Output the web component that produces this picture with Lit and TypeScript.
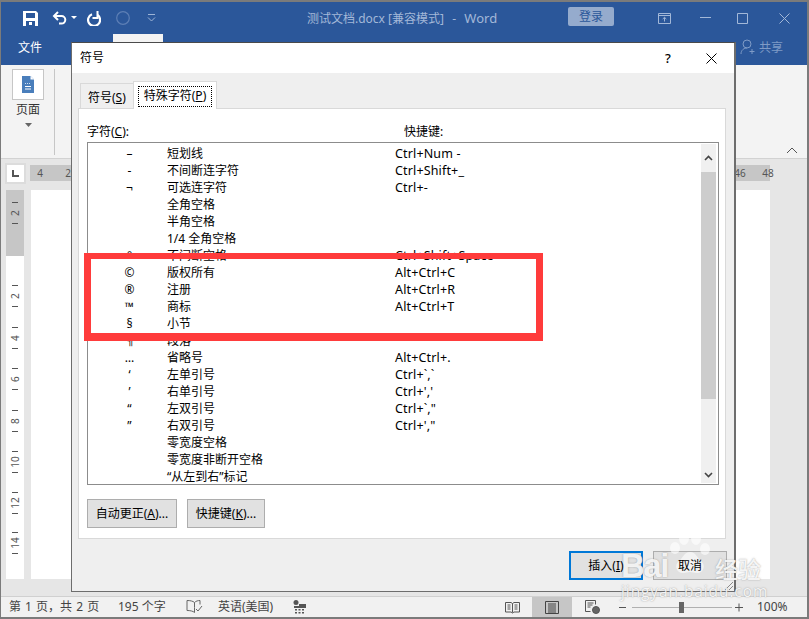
import { LitElement, html, css, svg } from "lit";
import { customElement } from "lit/decorators.js";

const rows: [string, string, string][] = [
  ["–", "短划线", "Ctrl+Num -"],
  ["-", "不间断连字符", "Ctrl+Shift+_"],
  ["¬", "可选连字符", "Ctrl+-"],
  ["", "全角空格", ""],
  ["", "半角空格", ""],
  ["", "1/4 全角空格", ""],
  ["°", "不间断空格", "Ctrl+Shift+Space"],
  ["©", "版权所有", "Alt+Ctrl+C"],
  ["®", "注册", "Alt+Ctrl+R"],
  ["™", "商标", "Alt+Ctrl+T"],
  ["§", "小节", ""],
  ["¶", "段落", ""],
  ["…", "省略号", "Alt+Ctrl+."],
  ["‘", "左单引号", "Ctrl+`,`"],
  ["’", "右单引号", "Ctrl+','"],
  ["“", "左双引号", "Ctrl+`,\""],
  ["”", "右双引号", "Ctrl+',\""],
  ["", "零宽度空格", ""],
  ["", "零宽度非断开空格", ""],
  ["", "“从左到右”标记", ""],
];

const vLabels: [number, string][] = [
  [23, "2"], [106, "2"], [148, "4"], [189, "6"], [231, "8"], [272, "10"], [313, "12"], [353, "14"],
];

@customElement("app-root")
export class AppRoot extends LitElement {
  static styles = css`
    :host {
      display: block;
      position: relative;
      width: 809px;
      height: 619px;
      overflow: hidden;
      font-family: "Noto Sans", "Noto Sans CJK SC", sans-serif;
      font-size: 12px;
      color: #1a1a1a;
    }
    * { box-sizing: border-box; }
    svg { display: block; flex: none; }
    u { text-underline-offset: 1px; }
    .frame {
      height: 619px;
      border: 1px solid #7b7b7b;
      border-width: 2px 2px 2px 1px;
      display: flex;
      flex-direction: column;
      background: #e6e6e6;
    }
    .titlebar {
      height: 32px;
      background: #2b579a;
      display: flex;
      align-items: center;
      color: #fff;
      position: relative;
    }
    .qat { display: flex; align-items: center; padding-left: 22px; }
    .qi1 { margin-left: 14px; }
    .qi2 { margin-left: 4px; }
    .qi3 { margin-left: 10px; }
    .qi4 { margin-left: 15px; }
    .qi5 { margin-left: 17px; }
    .title {
      position: absolute;
      left: 306px;
      top: 7px;
      color: #a3b8d8;
      font-size: 12px;
      line-height: 18px;
      white-space: pre;
    }
    .title .w { font-size: 13px; margin-left: 2px; }
    .title .d { margin-left: 2px; }
    .login {
      position: absolute;
      left: 567px;
      top: 5px;
      width: 46px;
      height: 19px;
      border-radius: 2px;
      background: #95abcd;
      color: #2b579a;
      font-size: 12px;
      line-height: 19px;
      text-align: center;
    }
    .winbtns { margin-left: auto; display: flex; align-items: center; }
    .wb1 { margin-right: 29px; }
    .wb2 { margin-right: 26px; }
    .wb3 { margin-right: 31px; }
    .wb4 { margin-right: 17px; }
    .tabrow {
      height: 31px;
      background: #2b579a;
      position: relative;
      color: #fff;
      font-size: 12px;
      display: flex;
    }
    .file { padding: 5px 0 0 17px; line-height: 18px; }
    .tabsliver { position: absolute; left: 112px; top: 0; width: 50px; height: 10px; background: #f3f3f3; }
    .share { position: absolute; left: 739px; top: 4px; display: flex; align-items: center; gap: 3px; color: #7f9bc6; }
    .ribbon {
      height: 94px;
      background: #f3f3f3;
      border-bottom: 1px solid #d2d2d2;
      position: relative;
      display: flex;
      padding: 4px 0 0 11px;
    }
    .pagegroup { width: 32px; display: flex; flex-direction: column; align-items: center; }
    .pagebtn {
      width: 32px;
      height: 31px;
      background: #fff;
      border: 1px solid #c6c6c6;
      display: flex;
      align-items: center;
      justify-content: center;
    }
    .pagelabel { line-height: 16px; margin-top: 2px; font-size: 12px; color: #333; }
    .caret { margin-top: 5px; }
    .ribsep { width: 1px; height: 86px; background: #c6c6c6; margin-left: 10px; }
    .collapse { position: absolute; left: 785px; top: 82px; }
    .doc {
      flex: 1;
      display: grid;
      grid-template-columns: 29px 740px 1fr;
      grid-template-rows: 6px 16px 9px 389px 1fr;
    }
    .corner {
      grid-column: 1;
      grid-row: 1 / 4;
      margin: 4px 0 0 4px;
      width: 21px;
      height: 21px;
      background: #fff;
      border: 2px solid #dcdcdc;
      display: flex;
      align-items: center;
      justify-content: center;
    }
    .hruler { grid-column: 2; grid-row: 2; overflow: visible; }
    .vruler { grid-column: 1; grid-row: 4; padding-left: 5px; }
    .page { grid-column: 2; grid-row: 4; background: #fff; margin-left: 1px; }
    .status {
      height: 21px;
      background: #f1f1f1;
      border-top: 1px solid #d0d0d0;
      display: flex;
      align-items: center;
      position: relative;
      color: #444;
      white-space: pre;
      line-height: 20px;
    }
    .status .st { position: absolute; top: 0; }
    .st.pg { word-spacing: 1px; }
    .st.active { background: #c6c6c6; height: 20px; width: 40px; left: 531px; display: flex; align-items: center; justify-content: center; }
    .st.icon { height: 20px; display: flex; align-items: center; }

    .dialog {
      position: absolute;
      left: 71px;
      top: 42px;
      width: 665px;
      height: 550px;
      background: #efefef;
      border: 1px solid #6d6d6d;
      border-right-width: 2px;
      border-top-color: #4a4a4a;
      display: flex;
      flex-direction: column;
      color: #000;
    }
    .dtitle {
      height: 30px;
      flex: none;
      background: #fff;
      display: flex;
      align-items: center;
      padding-left: 8px;
      line-height: 16px;
      font-size: 12px;
    }
    .help { margin-left: auto; width: 14px; text-align: center; font-size: 13px; font-weight: 500; margin-right: 31px; }
    .dclose { margin-right: 17px; }
    .tabs { display: flex; height: 36px; flex: none; align-items: flex-end; padding-left: 8px; position: relative; z-index: 1; margin-bottom: -1px; }
    .tab {
      height: 26px;
      width: 53px;
      border: 1px solid #d9d9d9;
      border-width: 1px 0 0 1px;
      padding: 5px 0 0 7px;
      line-height: 17px;
      white-space: nowrap;
    }
    .tab.on {
      height: 28px;
      width: 84px;
      background: #fff;
      border-width: 1px 1px 0 1px;
      padding: 4px;
    }
    .focus { border: 1px dotted #000; height: 21px; line-height: 18px; text-align: center; white-space: nowrap; }
    .panel {
      height: 431px;
      flex: none;
      margin: 0 8px 0 6px;
      background: #fff;
      border: 1px solid #d9d9d9;
      padding: 14px 6px 0 8px;
      display: flex;
      flex-direction: column;
    }
    .heads { height: 19px; flex: none; display: flex; line-height: 18px; }
    .heads .h1 { width: 317px; }
    .list {
      height: 343px;
      flex: none;
      border: 1px solid #8c8c8c;
      display: flex;
    }
    .items { flex: 1; padding-top: 2px; }
    .row { height: 17px; line-height: 17px; display: flex; white-space: pre; }
    .sym { width: 79px; padding-left: 4px; text-align: center; font-size: 12px; }
    .nm { width: 228px; }
    .key { font-size: 12.5px; letter-spacing: 0.15px; }
    .sb {
      width: 15px;
      margin: 1px 2px 1px 0;
      background: #f0f0f0;
      display: flex;
      flex-direction: column;
    }
    .sbbtn { height: 28px; flex: none; display: flex; align-items: center; justify-content: center; }
    .sbbtn.dn { height: 16px; margin-top: auto; }
    .thumb { height: 227px; flex: none; background: #cdcdcd; }
    .pbtns { display: flex; gap: 10px; margin-top: 14px; }
    .btn {
      height: 29px;
      background: #e1e1e1;
      border: 1px solid #adadad;
      text-align: center;
      line-height: 27px;
      white-space: nowrap;
    }
    .b1 { width: 90px; }
    .b2 { width: 78px; }
    .footer { display: flex; justify-content: flex-end; gap: 10px; margin: 12px 7px 0 0; }
    .b3 { width: 74px; }
    .b3.def { border: 2px solid #0078d7; line-height: 25px; }
    .b3 span { position: relative; z-index: 2; }
    .grip { position: absolute; right: 0; bottom: 0; }

    .red {
      position: absolute;
      left: 84px;
      top: 253px;
      width: 459px;
      height: 88px;
      border: 7px solid #ff3b3b;
      border-top-width: 6px;
      border-bottom-width: 8px;
    }
    .wm {
      position: absolute;
      z-index: 1;
      left: 621px;
      top: 528px;
      width: 150px;
      height: 76px;
      color: rgba(255, 255, 255, 0.88);
      text-shadow: 0 0 1.5px rgba(110, 110, 110, 0.7);
      pointer-events: none;
    }
    .wmtop { display: flex; align-items: flex-end; height: 54px; }
    .wmb { font-family: "Liberation Sans", sans-serif; font-size: 33px; line-height: 33px; font-weight: 700; letter-spacing: -1.5px; width: 48px; }
    .wmc { font-family: "Noto Sans CJK SC", sans-serif; font-size: 23px; line-height: 24px; margin: 0 0 2px 46px; font-weight: 500; }
    .wmu { font-family: "Open Sans", sans-serif; font-size: 15.5px; line-height: 20px; letter-spacing: 0.9px; white-space: nowrap; margin-top: -1px; }
    .paw { position: absolute; left: 46px; top: 0; }
  `;

  private qat() {
    return html`<div class="qat">
      <svg width="15" height="15" viewBox="0 0 15 15">
        <path fill="#fff" fill-rule="evenodd" d="M0 0h13l2 2v13H0zM3 2v5h9V2zM3 10v5h9v-5zM6 11h3v3H6z" />
      </svg>
      <svg class="qi1" width="15" height="14" viewBox="0 0 15 14" fill="none" stroke="#fff" stroke-width="2">
        <path d="M2 5h7.500a3.800 3.800 0 0 1 0 7.600H7" />
        <path d="M6 1 2 5l4 4" />
      </svg>
      <svg class="qi2" width="6" height="4" viewBox="0 0 6 4"><path d="M0 0h6L3 3z" fill="#fff" /></svg>
      <svg class="qi3" width="14" height="15" viewBox="0 0 14 15" fill="none" stroke="#fff" stroke-width="2.200">
        <path d="M5 3.300A6 6 0 1 0 10.500 4" />
        <path d="M10.500 0v7H5.500" stroke-width="2" />
      </svg>
      <svg class="qi4" width="14" height="14" viewBox="0 0 14 14" fill="none" stroke="#5d7fb5" stroke-width="1.200"><circle cx="7" cy="7" r="6.300" /></svg>
      <svg class="qi5" width="9" height="8" viewBox="0 0 9 8" fill="none" stroke="#9db4d6">
        <path d="M1 .5h7" /><path d="M1 3.500 4.500 7 8 3.500" />
      </svg>
    </div>`;
  }

  private winBtns() {
    return html`<div class="winbtns">
      <svg class="wb1" width="13" height="11" viewBox="0 0 13 11" fill="none" stroke="#a3b8d8">
        <path d="M.5.500h12v10H.5zM.5 2.500h12" /><path d="M6.500 8.500v-4M4.700 6 6.500 4.300 8.300 6" />
      </svg>
      <svg class="wb2" width="11" height="2" viewBox="0 0 11 2"><path d="M0 .5h11" stroke="#a3b8d8" /></svg>
      <svg class="wb3" width="11" height="11" viewBox="0 0 11 11" fill="none" stroke="#a3b8d8"><path d="M.5.500h10v10H.5z" /></svg>
      <svg class="wb4" width="11" height="11" viewBox="0 0 11 11" fill="none" stroke="#a3b8d8"><path d="M.5.500l10 10M10.500.500l-10 10" /></svg>
    </div>`;
  }

  private vruler() {
    const ticks: number[] = [];
    for (const [y] of vLabels) ticks.push(y - 11, y + 10);
    return html`<svg width="18" height="389" viewBox="0 0 18 389">
      <rect width="18" height="389" fill="#fff" />
      <rect width="18" height="66" fill="#c6c6c6" />
      ${ticks.map((y) => svg`<path d="M6 ${y + 0.5}h6" stroke="#555" />`)}
      ${vLabels.map(([y, t]) => svg`<text x="9" y="${y}" transform="rotate(-90 9 ${y})" text-anchor="middle" dominant-baseline="central" font-size="10" fill="#555">${t}</text>`)}
    </svg>`;
  }

  render() {
    return html`
      <div class="frame">
        <div class="titlebar">
          ${this.qat()}
          <div class="title">测试文档.docx [兼容模式]<span class="d">  -  </span><span class="w">Word</span></div>
          <div class="login">登录</div>
          ${this.winBtns()}
        </div>
        <div class="tabrow">
          <div class="file">文件</div>
          <div class="tabsliver"></div>
          <div class="share">
            <svg width="16" height="16" viewBox="0 0 16 16" fill="none" stroke="#7f9bc6">
              <circle cx="7" cy="5" r="4" /><path d="M1 15c0-4 3-6 6-6M12 10v5M9.500 12.500h5" />
            </svg>
            <span>共享</span>
          </div>
        </div>
        <div class="ribbon">
          <div class="pagegroup">
            <div class="pagebtn">
              <svg width="13" height="17" viewBox="0 0 13 17">
                <path d="M0 0h8.500L12 3.500V17H0z" fill="#4a7ebb" />
                <path d="M3 10.500h6M3 13h6" stroke="#fff" />
                <path d="M8.500 0v3.500H12" fill="#fff" />
                <path d="M3 7.500h6" stroke="#cfdff2" stroke-dasharray="1 1" />
              </svg>
            </div>
            <div class="pagelabel">页面</div>
            <svg class="caret" width="7" height="4" viewBox="0 0 7 4"><path d="M0 0h7L3.500 4z" fill="#666" /></svg>
          </div>
          <div class="ribsep"></div>
          <svg class="collapse" width="12" height="7" viewBox="0 0 12 7" fill="none" stroke="#555"><path d="M1 6l5-5 5 5" /></svg>
        </div>
        <div class="doc">
          <div class="corner">
            <svg width="7" height="7" viewBox="0 0 7 7"><path d="M0 0h2v5h5v2H0z" fill="#555" /></svg>
          </div>
          <svg class="hruler" width="740" height="16" viewBox="0 0 740 16" font-size="10" fill="#555">
            <rect width="740" height="16" fill="#c6c6c6" />
            <text x="10" y="12" text-anchor="middle">4</text>
            <text x="38" y="12" text-anchor="middle">2</text>
            <text x="710" y="12" text-anchor="middle">46</text>
            <text x="738" y="12" text-anchor="middle">48</text>
          </svg>
          <div class="vruler">${this.vruler()}</div>
          <div class="page"></div>
        </div>
        <div class="status">
          <span class="st pg" style="left:8px">第 1 页，共 2 页</span>
          <span class="st" style="left:117px">195 个字</span>
          <span class="st icon" style="left:185px">
            <svg width="17" height="14" viewBox="0 0 17 14" fill="none" stroke="#666">
              <path d="M8.500 2.500C7 1 4 .5 1 .5v10c3 0 6 .5 7.500 2 0-3 0-7 0-10zM8.500 2.500C10 1 12 .5 14 .5v4M10 9l2 2 4-5" />
            </svg>
          </span>
          <span class="st" style="left:217px">英语(美国)</span>
          <span class="st icon" style="left:292px">
            <svg width="13" height="14" viewBox="0 0 13 14" fill="#555">
              <circle cx="3" cy="2.500" r="2.500" />
              <rect x="6" y="4" width="7" height="2" />
              <rect x="1" y="6" width="12" height="2" />
              <path d="M2 9h2v1.500H2zM5.500 9h2v1.500h-2zM9 9h2v1.500H9zM2 12h2v1.500H2zM5.500 12h2v1.500h-2zM9 12h2v1.500H9z" />
            </svg>
          </span>
          <span class="st icon" style="left:504px">
            <svg width="15" height="13" viewBox="0 0 15 13" fill="none" stroke="#555">
              <path d="M.5 1.500h5.500l1.500 1 1.500-1h5.500v9.500H9l-1.500 1-1.500-1H.5zM7.500 2.500v9M2.500 4h3M2.500 6h3M2.500 8h3M9.500 4h3M9.500 6h3M9.500 8h3" />
            </svg>
          </span>
          <span class="st active">
            <svg width="14" height="13" viewBox="0 0 14 13" fill="none" stroke="#444">
              <path d="M.5.500h13v12H.5zM3 3h8M3 5h8M3 7h8M3 9h8M3 11h8" />
            </svg>
          </span>
          <span class="st icon" style="left:584px">
            <svg width="15" height="14" viewBox="0 0 15 14" fill="none" stroke="#555">
              <path d="M.5.500h10v4M.5.500v11h5M2.500 3h6M2.500 5h5M2.500 7h3" />
              <circle cx="11" cy="10" r="3.500" fill="#666" />
            </svg>
          </span>
          <span class="st icon" style="left:618px">
            <svg width="126" height="14" viewBox="0 0 126 14">
              <path d="M0 7.500h7" stroke="#555" />
              <path d="M13 7.500h100" stroke="#b0b0b0" />
              <rect x="60" y="2" width="5" height="11" fill="#666" />
              <path d="M116 7.500h8M120 3.500v8" stroke="#555" />
            </svg>
          </span>
          <span class="st" style="left:756px">100%</span>
        </div>
      </div>

      <div class="dialog">
        <div class="dtitle">
          <span>符号</span>
          <span class="help">?</span>
          <svg class="dclose" width="11" height="11" viewBox="0 0 11 11" fill="none" stroke="#000"><path d="M.5.500l10 10M10.500.500l-10 10" /></svg>
        </div>
        <div class="tabs">
          <div class="tab">符号(<u>S</u>)</div>
          <div class="tab on"><div class="focus">特殊字符(<u>P</u>)</div></div>
        </div>
        <div class="panel">
          <div class="heads">
            <span class="h1">字符(<u>C</u>):</span>
            <span>快捷键:</span>
          </div>
          <div class="list">
            <div class="items">
              ${rows.map(
                ([s, n, k]) => html`<div class="row"><span class="sym">${s}</span><span class="nm">${n}</span><span class="key">${k}</span></div>`
              )}
            </div>
            <div class="sb">
              <div class="sbbtn">
                <svg width="9" height="6" viewBox="0 0 9 6" fill="none" stroke="#444" stroke-width="1.600"><path d="M1 5l3.500-3.500L8 5" /></svg>
              </div>
              <div class="thumb"></div>
              <div class="sbbtn dn">
                <svg width="9" height="6" viewBox="0 0 9 6" fill="none" stroke="#444" stroke-width="1.600"><path d="M1 1l3.500 3.500L8 1" /></svg>
              </div>
            </div>
          </div>
          <div class="pbtns">
            <div class="btn b1">自动更正(<u>A</u>)...</div>
            <div class="btn b2">快捷键(<u>K</u>)...</div>
          </div>
        </div>
        <div class="footer">
          <div class="btn b3 def"><span>插入(<u>I</u>)</span></div>
          <div class="btn b3"><span>取消</span></div>
        </div>
        <svg class="grip" width="11" height="11" viewBox="0 0 11 11" stroke="#8a8a8a" fill="none"><path d="M10 2 2 10M10 6l-4 4" /></svg>
      </div>

      <div class="red"></div>

      <div class="wm">
        <svg class="paw" width="44" height="52" viewBox="0 0 44 52" fill="rgba(255,255,255,0.6)">
          <ellipse cx="8" cy="20" rx="5" ry="6" />
          <ellipse cx="17" cy="10" rx="5" ry="7" />
          <ellipse cx="29" cy="10" rx="5" ry="7" />
          <ellipse cx="38" cy="21" rx="5" ry="6" />
          <path d="M23 24c-6 0-7 6-11 9-5 4-3 12 4 12 3 0 5-1 7-1s4 1 7 1c7 0 9-8 4-12-4-3-5-9-11-9z" />
        </svg>
        <div class="wmtop"><span class="wmb">Bai</span><span class="wmc">经验</span></div>
        <div class="wmu">jingyan.baidu.com</div>
      </div>
    `;
  }
}
